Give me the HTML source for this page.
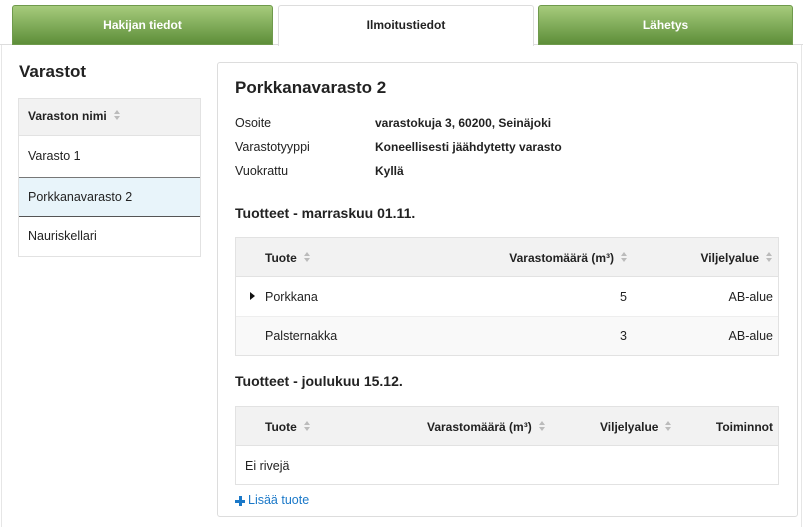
<!DOCTYPE html>
<html><head><meta charset="utf-8"><style>
*{box-sizing:border-box;margin:0;padding:0}
body{width:803px;height:527px;background:#fff;font-family:"Liberation Sans",Arial,sans-serif;font-size:12.5px;color:#222;position:relative;overflow:hidden}
.abs{position:absolute}
.tab{position:absolute;top:5px;height:40px;border-radius:3px 3px 0 0;text-align:center;line-height:38px;font-weight:bold;font-size:12px}
.g{background:linear-gradient(#a6cb7c,#5d8e39);color:#fff;border:1px solid #6f9a4c}
.w{background:#fff;border:1px solid #ddd;border-bottom:none;color:#222;height:41px;z-index:2}
.line{top:44px;left:0;width:803px;height:1px;background:#ddd}
.side{top:45px;left:1px;width:1px;height:482px;background:#e6e6e6}
.sort{display:inline-block;width:7px;height:10px;vertical-align:top;margin-top:1px;margin-left:7px;position:relative}
.sort:before{content:"";position:absolute;left:0;top:0;border-left:3.5px solid transparent;border-right:3.5px solid transparent;border-bottom:4px solid #bbb}
.sort:after{content:"";position:absolute;left:0;top:6px;border-left:3.5px solid transparent;border-right:3.5px solid transparent;border-top:4px solid #bbb}
.hd{background:#f2f2f2;font-weight:bold;border-bottom:1px solid #e2e2e2}
.b{font-weight:bold}
</style></head><body>
<div class="abs line"></div>
<div class="abs side"></div>
<div class="abs side" style="left:801px"></div>
<div class="tab g" style="left:12px;width:261px">Hakijan tiedot</div>
<div class="tab w" style="left:278px;width:256px">Ilmoitustiedot</div>
<div class="tab g" style="left:538px;width:255px">Lähetys</div>

<div class="abs b" style="left:19px;top:62px;font-size:17px">Varastot</div>
<div class="abs" style="left:18px;top:98px;width:183px;height:159px;border:1px solid #e2e2e2">
 <div class="hd" style="height:37px;line-height:35px;padding-left:9px;font-size:12px">Varaston nimi<span class="sort" style="margin-top:11px"></span></div>
 <div style="height:41px;line-height:40px;padding-left:9px">Varasto 1</div>
 <div style="height:40px;line-height:38px;padding-left:9px;background:#e8f4fa;border-top:1px solid #777;border-bottom:1px solid #555">Porkkanavarasto 2</div>
 <div style="height:39px;line-height:39px;padding-left:9px">Nauriskellari</div>
</div>

<div class="abs" style="left:217px;top:62px;width:581px;height:455px;border:1px solid #ddd;border-radius:3px"></div>
<div class="abs b" style="left:235px;top:78px;font-size:17px">Porkkanavarasto 2</div>
<div class="abs" style="left:235px;top:116px">Osoite</div><div class="abs b" style="left:375px;top:116px;font-size:12px">varastokuja 3, 60200, Seinäjoki</div>
<div class="abs" style="left:235px;top:140px">Varastotyyppi</div><div class="abs b" style="left:375px;top:140px;font-size:12px">Koneellisesti jäähdytetty varasto</div>
<div class="abs" style="left:235px;top:164px">Vuokrattu</div><div class="abs b" style="left:375px;top:164px;font-size:12px">Kyllä</div>
<div class="abs b" style="left:235px;top:205px;font-size:14px">Tuotteet - marraskuu 01.11.</div>

<div class="abs" style="left:235px;top:237px;width:544px;height:119px;border:1px solid #e2e2e2">
 <div class="hd abs" style="left:0;top:0;width:542px;height:39px"></div>
 <div class="abs b" style="left:29px;top:13px;font-size:12px">Tuote<span class="sort"></span></div>
 <div class="abs b" style="right:150px;top:13px;font-size:12px">Varastomäärä (m³)<span class="sort"></span></div>
 <div class="abs b" style="right:5px;top:13px;font-size:12px">Viljelyalue<span class="sort"></span></div>
 <div class="abs" style="left:14px;top:54px;border-top:4px solid transparent;border-bottom:4px solid transparent;border-left:5px solid #111"></div>
 <div class="abs" style="left:29px;top:52px">Porkkana</div>
 <div class="abs" style="right:151px;top:52px">5</div>
 <div class="abs" style="right:5px;top:52px">AB-alue</div>
 <div class="abs" style="left:0;top:78px;width:542px;height:39px;background:#f9f9f9;border-top:1px solid #eee"></div>
 <div class="abs" style="left:29px;top:91px">Palsternakka</div>
 <div class="abs" style="right:151px;top:91px">3</div>
 <div class="abs" style="right:5px;top:91px">AB-alue</div>
</div>

<div class="abs b" style="left:235px;top:373px;font-size:14px">Tuotteet - joulukuu 15.12.</div>
<div class="abs" style="left:235px;top:406px;width:544px;height:79px;border:1px solid #e2e2e2">
 <div class="hd abs" style="left:0;top:0;width:542px;height:39px"></div>
 <div class="abs b" style="left:29px;top:13px;font-size:12px">Tuote<span class="sort"></span></div>
 <div class="abs b" style="left:191px;top:13px;font-size:12px">Varastomäärä (m³)<span class="sort"></span></div>
 <div class="abs b" style="left:364px;top:13px;font-size:12px">Viljelyalue<span class="sort"></span></div>
 <div class="abs b" style="right:5px;top:13px;font-size:12px">Toiminnot</div>
 <div class="abs" style="left:9px;top:52px">Ei rivejä</div>
</div>
<div class="abs" style="left:235px;top:496px;width:10px;height:10px">
 <div class="abs" style="left:0;top:4px;width:10px;height:3px;background:#1a78c8"></div>
 <div class="abs" style="left:3.5px;top:0;width:3px;height:10px;background:#1a78c8"></div>
</div>
<div class="abs" style="left:248px;top:493px;color:#1a78c8">Lisää tuote</div>
</body></html>
